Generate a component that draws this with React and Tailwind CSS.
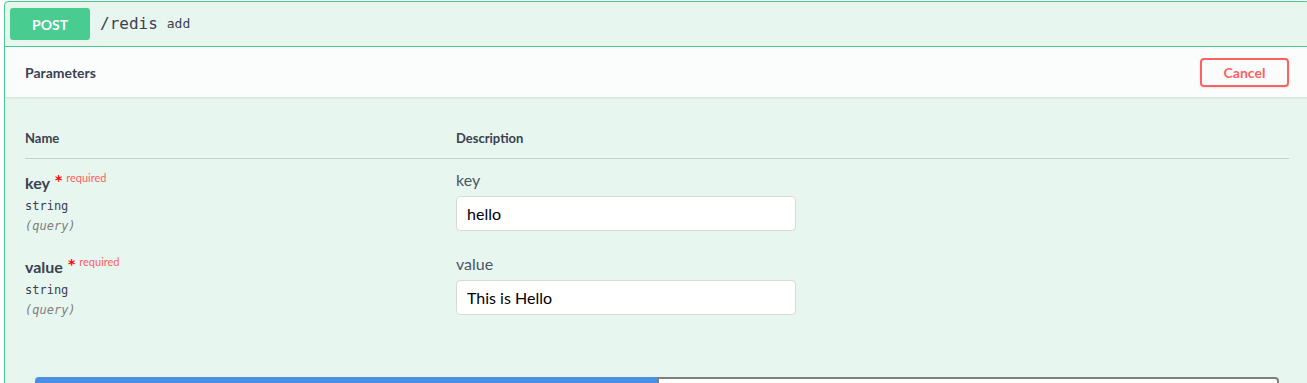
import React from "react";

const sans = "font-['Lato','Open_Sans',sans-serif]";
const mono = "font-['DejaVu_Sans_Mono','Liberation_Mono',monospace]";

const params = [
  { name: "key", type: "string", place: "query", value: "hello" },
  { name: "value", type: "string", place: "query", value: "This is Hello" },
];

const ParamRow = ({ item }) => (
  <div className="flex h-[84px] pt-[11px]">
    <div className="w-[431px] shrink-0">
      <div className={`flex items-start h-[20px] mt-[3px] ${sans}`}>
        <span className="text-[16px] leading-[20px] font-bold text-[#3b4151]">{item.name}</span>
        <span className="ml-[5px] text-[14px] leading-[14px] font-bold text-[#ff0000] font-['DejaVu_Sans',sans-serif]">*</span>
        <span className="ml-[4px] text-[11px] leading-[12px] text-[#ff6060] -mt-[1px]">required</span>
      </div>
      <div className={`mt-[3px] text-[12px] leading-[20px] text-[#3b4151] ${mono}`}>{item.type}</div>
      <div className={`text-[12px] leading-[20px] italic text-[#808080] ${mono}`}>({item.place})</div>
    </div>
    <div className="flex-1">
      <div className={`text-[16px] leading-[20px] text-[#4b5565] ${sans}`}>{item.name}</div>
      <input
        className={`mt-[6px] w-[340px] h-[35px] bg-white border border-[#d9d9d9] rounded-[4px] px-[10px] text-[16px] text-black outline-none ${sans}`}
        defaultValue={item.value}
      />
    </div>
  </div>
);

const App = () => {
  return (
    <div className="w-[1307px] h-[383px] overflow-hidden bg-white pt-px pl-[4px]">
      <div className="w-[1306px] rounded-[4px] border border-[#49cc90] bg-[#e8f6f0]">
        <div className="flex items-center h-[45px] px-[5px] border-b border-[#49cc90]">
          <div className={`w-[80px] h-[32px] rounded-[3px] bg-[#49cc90] text-white font-bold text-[14px] flex items-center justify-center ${sans}`}>
            POST
          </div>
          <span className={`ml-[10px] text-[16px] text-[#3b4151] ${mono}`}>/redis</span>
          <span className={`ml-[9px] text-[13px] text-[#3b4151] ${mono}`}>add</span>
        </div>

        <div className="flex items-center justify-between h-[50px] px-[20px] bg-white/80 shadow-[0_1px_2px_rgba(0,0,0,0.1)]">
          <span className={`text-[14px] font-bold text-[#3b4151] ${sans}`}>Parameters</span>
          <button className={`w-[89px] h-[29px] border-2 border-[#ff6060] rounded-[4px] text-[#ff6060] font-bold text-[14px] shadow-[0_1px_2px_rgba(0,0,0,0.1)] ${sans}`}>
            Cancel
          </button>
        </div>

        <div className="px-[20px] pt-[33px]">
          <div className={`flex h-[29px] border-b border-[#3b4151]/20 text-[13px] leading-[16px] font-bold text-[#3b4151] ${sans}`}>
            <div className="w-[431px]">Name</div>
            <div>Description</div>
          </div>
          {params.map((item) => (
            <ParamRow key={item.name} item={item} />
          ))}
        </div>

        <div className="px-[30px] pt-[50px] flex">
          <button aria-label="Execute" className="w-1/2 h-[40px] bg-[#4990e2] rounded-l-[4px]" />
          <button aria-label="Clear" className="w-1/2 h-[40px] border-2 border-[#808080] bg-white rounded-r-[4px]" />
        </div>
      </div>
    </div>
  );
};

export default App;
